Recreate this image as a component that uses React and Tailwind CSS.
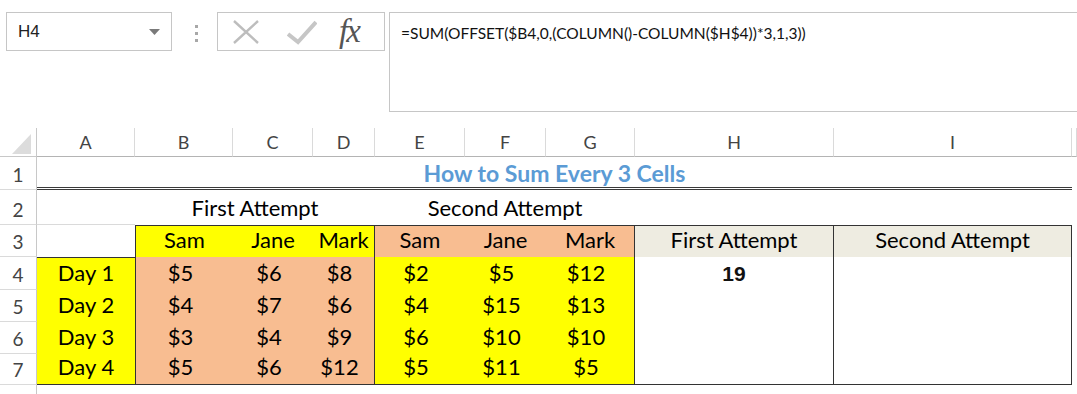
const cellFont = { fontFamily: 'Lato, "Open Sans", sans-serif' };

const rowHeads = [
  { n: '1', h: 'h-[33px]' },
  { n: '2', h: 'h-[35px]' },
  { n: '3', h: 'h-[32px]' },
  { n: '4', h: 'h-[33px]' },
  { n: '5', h: 'h-[32px]' },
  { n: '6', h: 'h-[32px]' },
  { n: '7', h: 'h-[31px]' },
];

const colHeads = ['A', 'B', 'C', 'D', 'E', 'F', 'G', 'H', 'I', ''];

const first = [
  ['$5', '$6', '$8'],
  ['$4', '$7', '$6'],
  ['$3', '$4', '$9'],
  ['$5', '$6', '$12'],
];
const second = [
  ['$2', '$5', '$12'],
  ['$4', '$15', '$13'],
  ['$6', '$10', '$10'],
  ['$5', '$11', '$5'],
];

function Cell({ children, className = '' }) {
  return (
    <div className={`flex items-end justify-center pb-[6px] leading-none text-[22px] text-black ${className}`}>
      {children}
    </div>
  );
}

function FormulaBar() {
  return (
    <div className="flex items-start pt-3 h-[112px]">
      <div className="ml-[6px] w-[166px] h-[39px] border border-[#c6c6c6] flex items-center justify-between pl-[11px] pr-[11px]">
        <span className="text-[17px] text-[#222]" style={{ fontFamily: '"Liberation Sans", Arial, sans-serif' }}>H4</span>
        <svg width="11" height="6" viewBox="0 0 11 6"><path d="M0 0h11L5.5 6z" fill="#7a7a7a" /></svg>
      </div>
      <div className="ml-[23px] mt-[13px] flex flex-col gap-[4px]">
        <span className="w-[3px] h-[3px] bg-[#a8a8a8]" />
        <span className="w-[3px] h-[3px] bg-[#a8a8a8]" />
        <span className="w-[3px] h-[3px] bg-[#a8a8a8]" />
      </div>
      <div className="ml-[19px] w-[168px] h-[39px] border border-[#c6c6c6] flex items-center">
        <svg className="ml-[14px]" width="28" height="26" viewBox="0 0 28 26">
          <path d="M2 2L26 24M26 2L2 24" stroke="#bdbdbd" strokeWidth="2.4" fill="none" />
        </svg>
        <svg className="ml-[27px]" width="30" height="26" viewBox="0 0 30 26">
          <path d="M1 15L11 23L29 3" stroke="#c6c6c6" strokeWidth="4" fill="none" strokeLinejoin="miter" />
        </svg>
        <span
          className="ml-[22px] italic text-[33px] leading-none text-[#555] tracking-[-2px]"
          style={{ fontFamily: '"Liberation Serif", "DejaVu Serif", serif' }}
        >
          fx
        </span>
      </div>
      <div className="ml-[4px] flex-1 h-[100px] border-l border-t border-b border-[#c6c6c6] pl-[11px] pt-[8px]">
        <span className="text-[15.5px] leading-[22px] text-[#111]" style={cellFont}>
          =SUM(OFFSET($B4,0,(COLUMN()-COLUMN($H$4))*3,1,3))
        </span>
      </div>
    </div>
  );
}

export default function App() {
  return (
    <div className="w-[1077px] h-[394px] bg-white overflow-hidden" style={cellFont}>
      <FormulaBar />
      <div className="mt-4 h-[266px] grid grid-cols-[37px_98px_98px_80px_62px_90px_81px_89px_199px_238px_1fr] grid-rows-[29px_33px_35px_32px_33px_32px_32px_31px_1fr]">
        {/* corner */}
        <div className="border-r border-b border-[#c8c8c8] flex items-end justify-end pr-[5px] pb-[2px]">
          <svg width="19" height="20" viewBox="0 0 19 20"><path d="M19 0V20H0z" fill="#dcdcdc" /></svg>
        </div>
        {colHeads.map((c, i) => (
          <div
            key={i}
            className="border-r border-b border-r-[#dadada] border-b-[#b4b4b4] flex items-center justify-center text-[18px] text-[#444]"
          >
            {c}
          </div>
        ))}

        {/* row headers */}
        {rowHeads.map((r, i) => (
          <div
            key={r.n}
            className="col-start-1 border-r border-b border-r-[#c8c8c8] border-b-[#dadada] flex items-end justify-center pb-[5px] leading-none text-[19px] text-[#444]"
            style={{ gridRowStart: i + 2 }}
          >
            {r.n}
          </div>
        ))}
        <div className="col-start-1 row-start-9 border-r border-[#c8c8c8]" />

        {/* row 1 title */}
        <div className="col-start-2 col-span-9 row-start-2 border-b-[3px] border-double border-[#3a3a3a] flex items-end justify-center pb-[2px] leading-none text-[23px] font-bold text-[#5b9bd5]">
          How to Sum Every 3 Cells
        </div>

        {/* row 2 */}
        <div className="col-start-2 row-start-3 border-b border-[#dadada]" />
        <Cell className="col-start-3 col-span-3 row-start-3">First Attempt</Cell>
        <Cell className="col-start-6 col-span-3 row-start-3">Second Attempt</Cell>

        {/* A4:A7 */}
        <div className="col-start-2 row-start-5 row-span-4 border-t border-b border-[#333] bg-[#ffff00] grid grid-rows-[32px_32px_32px_30px]">
          {['Day 1', 'Day 2', 'Day 3', 'Day 4'].map((d) => (
            <Cell key={d}>{d}</Cell>
          ))}
        </div>

        {/* B3:D7 */}
        <div className="col-start-3 col-span-3 row-start-4 row-span-5 border border-[#333] grid grid-cols-[97px_80px_61px] grid-rows-[31px_33px_32px_32px_30px]">
          {['Sam', 'Jane', 'Mark'].map((n) => (
            <Cell key={n} className="bg-[#ffff00]">{n}</Cell>
          ))}
          {first.flat().map((v, i) => (
            <Cell key={i} className="bg-[#f8bd91] pr-2">{v}</Cell>
          ))}
        </div>

        {/* E3:G7 */}
        <div className="col-start-6 col-span-3 row-start-4 row-span-5 border-t border-r border-b border-[#333] grid grid-cols-[90px_81px_88px] grid-rows-[31px_33px_32px_32px_30px]">
          {['Sam', 'Jane', 'Mark'].map((n) => (
            <Cell key={n} className="bg-[#f8bd91]">{n}</Cell>
          ))}
          {second.flat().map((v, i) => (
            <Cell key={i} className="bg-[#ffff00] pr-2">{v}</Cell>
          ))}
        </div>

        {/* H3:H7 */}
        <div className="col-start-9 row-start-4 row-span-5 border-t border-r border-b border-[#333] grid grid-rows-[31px_33px_1fr]">
          <Cell className="bg-[#eeece1]">First Attempt</Cell>
          <div
            className="flex items-end justify-center pb-[6px] leading-none text-[21px] font-bold text-[#111]"
            style={{ fontFamily: '"Liberation Sans", Arial, sans-serif' }}
          >
            19
          </div>
          <div />
        </div>

        {/* I3:I7 */}
        <div className="col-start-10 row-start-4 row-span-5 border-t border-r border-b border-[#333] grid grid-rows-[31px_1fr]">
          <Cell className="bg-[#eeece1]">Second Attempt</Cell>
          <div />
        </div>
      </div>
    </div>
  );
}
